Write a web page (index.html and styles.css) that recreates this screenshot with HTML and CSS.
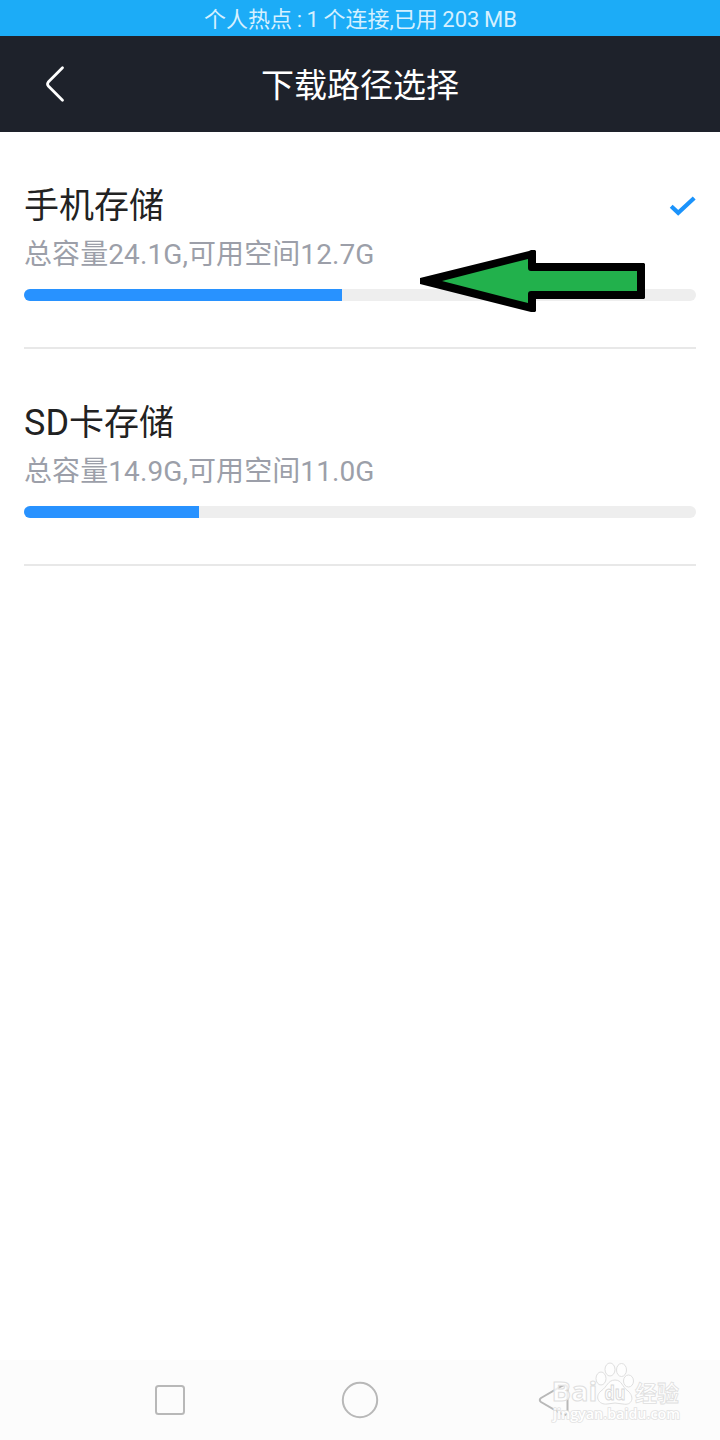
FILE: index.html
```html
<!DOCTYPE html>
<html lang="zh-CN">
<head>
<meta charset="utf-8">
<title>下载路径选择</title>
<link rel="stylesheet" href="styles.css">
</head>
<body>
<div class="screen">
  <div class="hotspot">个人热点 : 1 个连接,已用 203 MB</div>
  <header class="header">
    <svg class="back" width="24" height="40" viewBox="0 0 24 40" fill="none" stroke="#fff" stroke-width="2.8" stroke-linecap="round" stroke-linejoin="round"><path d="M18.5 3.8 4.3 18Q2.8 20 4.3 22L18.5 36.2"/></svg>
    <h1 class="title">下载路径选择</h1>
  </header>
  <main class="list">
    <section class="item">
      <div class="item-head">
        <h2 class="name">手机存储</h2>
        <svg class="check" width="28" height="24" viewBox="0 0 28 24" fill="none" stroke="#1b93fb" stroke-width="4.2"><path d="M3.2 11.2 10.2 17.8 26.2 3"/></svg>
      </div>
      <p class="detail">总容量24.1G,可用空间12.7G</p>
      <div class="bar"><div class="fill" style="width:318px"></div></div>
      <svg class="arrow" width="226" height="62" viewBox="0 0 226 62"><path d="M0 28 109 1 111 0H115L116 1V13H224L225 14V48L224 49H116V61L115 62H111L0 34Z"/><path class="arrow-body" d="M22 31 108 9V18Q108 21 111 21H217V41H111Q108 41 108 44V53Z"/></svg>
    </section>
    <section class="item">
      <div class="item-head"><h2 class="name"><span class="latin">SD</span>卡存储</h2></div>
      <p class="detail">总容量14.9G,可用空间11.0G</p>
      <div class="bar"><div class="fill" style="width:175px"></div></div>
    </section>
  </main>
  <nav class="nav">
    <svg width="40" height="40" viewBox="0 0 40 40"><rect x="6" y="6" width="28" height="28" rx="2.500"/></svg>
    <svg width="40" height="40" viewBox="0 0 40 40"><circle cx="20" cy="20" r="17.200"/></svg>
    <svg width="40" height="40" viewBox="0 0 40 40"><path d="M11 18 31 6.300Q37 3.500 37.500 8V32Q37 36.500 31 33.700L11 22Q8.500 20 11 18Z"/></svg>
    <svg class="watermark" width="140" height="64" viewBox="0 0 140 64">
      <g class="outlined">
        <text x="5.500" y="41" font-size="27" textLength="46" lengthAdjust="spacingAndGlyphs">Bai</text>
        <ellipse cx="55" cy="18.500" rx="5" ry="6.500"/><ellipse cx="64" cy="9.500" rx="5" ry="6.500"/><ellipse cx="75.500" cy="10" rx="5" ry="6.500"/><ellipse cx="82.500" cy="21" rx="5" ry="6"/>
        <path d="M69 20C62 20 61 27 55 31C48 37 53 45 61 44Q69 42 77 44C86 46 89 37 82 31C76 27 76 20 69 20Z"/>
        <text x="58.500" y="40" font-size="19" textLength="21" lengthAdjust="spacingAndGlyphs" class="du">du</text>
        <text x="89" y="41" font-size="22" textLength="44" class="cjk">经验</text>
        <text x="7" y="59" font-size="14" textLength="127" lengthAdjust="spacingAndGlyphs" class="url">jingyan.baidu.com</text>
      </g>
    </svg>
  </nav>
</div>
</body>
</html>
```
FILE: styles.css
```css
* { box-sizing: border-box; }
body, h1, h2, p { margin: 0; font-weight: 400; }
body { font-family: Roboto, "Noto Sans CJK SC", sans-serif; background: #fff; }
.screen { width: 720px; height: 1440px; display: flex; flex-direction: column; overflow: hidden; }
.hotspot { height: 36px; padding-left: 1px; line-height: 40px; text-align: center; font-size: 22px; word-spacing: -0.9px; color: #d5f0ff; background: #1cacf7; }
.header { height: 96px; display: grid; grid-template-columns: 110px 1fr 110px; align-items: center; background: #1e222b; color: #fff; }
.back { margin-left: 44px; }
.title { text-align: center; font-size: 33px; line-height: 48px; padding-top: 4px; }
.list { flex: 1; padding: 0 24px; }
.item { position: relative; height: 217px; padding-top: 49px; border-bottom: 2px solid #e8e8e8; }
.item-head { display: flex; justify-content: space-between; height: 52px; }
.name { font-size: 35px; line-height: 52px; color: #222; }
.latin { font-size: 36px; line-height: 1; }
.check { margin-top: 14px; }
.detail { height: 42px; line-height: 44px; font-size: 28px; letter-spacing: 0.09px; color: #9c9fa9; white-space: nowrap; }
.bar { height: 12px; margin-top: 14px; border-radius: 6px; overflow: hidden; background: #eee; }
.fill { height: 12px; background: #2892ff; }
.arrow { position: absolute; left: 396px; top: 118px; }
.arrow-body { fill: #22b14c; }
.nav { position: relative; height: 80px; padding: 0 150px; display: flex; align-items: center; justify-content: space-between; background: #fcfcfc; fill: none; stroke: #b8b8b8; stroke-width: 2; }
.nav .watermark { position: absolute; left: 546px; top: 0; }
.outlined { fill: #fff; fill-opacity: 0.75; stroke: #dfdfdf; stroke-width: 1; font-family: "Open Sans", "Noto Sans CJK SC", sans-serif; font-weight: 700; }
.du { stroke: #d8d8d8; }
.cjk { font-family: "Noto Sans CJK SC", sans-serif; stroke-width: 0.8; }
.url { font-weight: 600; stroke: #e2e2e2; stroke-width: 1.6; paint-order: stroke; fill-opacity: 1; }
```
